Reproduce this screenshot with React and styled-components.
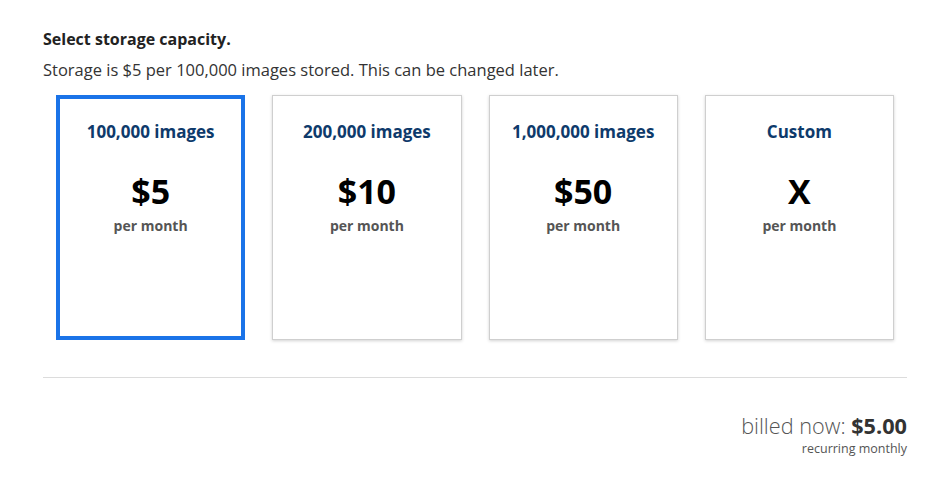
import React from "react"
import styled, { createGlobalStyle } from "styled-components"

const GlobalStyle = createGlobalStyle`
  body {
    margin: 0;
    background: #fff;
    font-family: "Open Sans", "Noto Sans", "Liberation Sans", sans-serif;
    color: #222;
  }
`

const Page = styled.div`
  width: 864px;
  padding: 28px 0 0 43px;
`

const Title = styled.h3`
  margin: 0;
  font-size: 16px;
  line-height: 22px;
  font-weight: 700;
  color: #222;
`

const Lead = styled.p`
  margin: 9px 0 0;
  font-size: 16.5px;
  line-height: 22px;
  color: #333;
`

const Cards = styled.div`
  display: flex;
  gap: 27px;
  padding: 0 13px;
  margin-top: 14px;
`

const Card = styled.div`
  box-sizing: border-box;
  width: 190px;
  height: 245px;
  display: flex;
  flex-direction: column;
  align-items: center;
  background: #fff;
  border: ${p => (p.selected ? "4px solid #1a73e8" : "1px solid #cfcfcf")};
  box-shadow: ${p => (p.selected ? "none" : "0 1px 3px rgba(0,0,0,0.18)")};
  padding-top: ${p => (p.selected ? "22px" : "25px")};
`

const Plan = styled.div`
  font-size: 17px;
  line-height: 22px;
  font-weight: 700;
  color: #0e3a6b;
`

const Price = styled.div`
  margin-top: 28px;
  font-size: 34px;
  line-height: 40px;
  font-weight: 700;
  color: #000;
`

const Per = styled.div`
  margin-top: 5px;
  font-size: 14px;
  line-height: 20px;
  font-weight: 700;
  color: #555;
`

const Divider = styled.hr`
  margin: 37px 0 0;
  border: 0;
  border-top: 1px solid #dcdcdc;
`

const Billing = styled.div`
  margin-top: 34px;
  text-align: right;
`

const BilledLine = styled.div`
  font-size: 21.7px;
  line-height: 28px;
  font-weight: 300;
  color: #555;

  strong {
    font-weight: 700;
    color: #333;
  }
`

const Recurring = styled.div`
  margin-top: 1px;
  font-size: 12.5px;
  line-height: 16px;
  color: #555;
`

const plans = [
  { label: "100,000 images", price: "$5", selected: true },
  { label: "200,000 images", price: "$10" },
  { label: "1,000,000 images", price: "$50" },
  { label: "Custom", price: "X" },
]

export default function App() {
  return (
    <Page>
      <GlobalStyle />
      <Title>Select storage capacity.</Title>
      <Lead>Storage is $5 per 100,000 images stored. This can be changed later.</Lead>
      <Cards>
        {plans.map(p => (
          <Card key={p.label} selected={p.selected}>
            <Plan>{p.label}</Plan>
            <Price>{p.price}</Price>
            <Per>per month</Per>
          </Card>
        ))}
      </Cards>
      <Divider />
      <Billing>
        <BilledLine>
          billed now: <strong>$5.00</strong>
        </BilledLine>
        <Recurring>recurring monthly</Recurring>
      </Billing>
    </Page>
  )
}
